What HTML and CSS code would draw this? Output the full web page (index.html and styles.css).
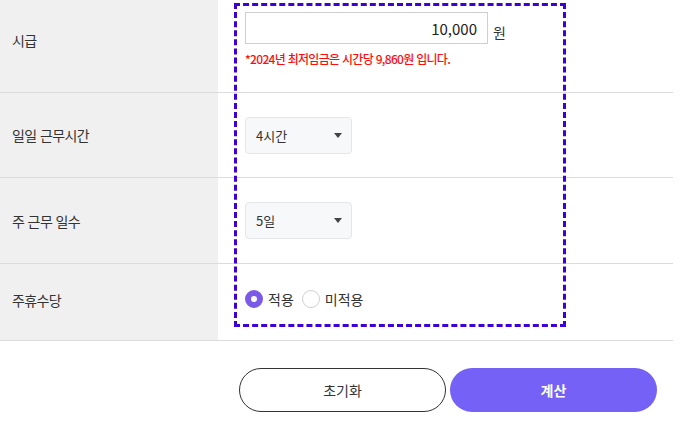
FILE: index.html
```html
<!DOCTYPE html>
<html lang="ko">
<head>
    <meta charset="UTF-8">
    <meta name="viewport" content="width=device-width, initial-scale=1.0">
    <title>시급 계산기</title>
    <link rel="stylesheet" href="styles.css">
</head>
<body>
    <div class="calc">
        <div class="row row-wage">
            <div class="label">시급</div>
            <div class="value">
                <div class="wage-line">
                    <input class="wage-input" type="text" value="10,000">
                    <span class="unit">원</span>
                </div>
                <p class="note">*2024년 최저임금은 시간당 9,860원 입니다.</p>
            </div>
        </div>
        <div class="row row-hours">
            <div class="label">일일 근무시간</div>
            <div class="value">
                <div class="select"><span>4시간</span><span class="caret"></span></div>
            </div>
        </div>
        <div class="row row-days">
            <div class="label">주 근무 일수</div>
            <div class="value">
                <div class="select"><span>5일</span><span class="caret"></span></div>
            </div>
        </div>
        <div class="row row-holiday">
            <div class="label">주휴수당</div>
            <div class="value radios">
                <label class="radio"><span class="dot checked"></span>적용</label>
                <label class="radio"><span class="dot"></span>미적용</label>
            </div>
        </div>
        <div class="highlight"></div>
    </div>
    <div class="actions">
        <button class="btn btn-reset">초기화</button>
        <button class="btn btn-calc">계산</button>
    </div>
</body>
</html>
```

FILE: styles.css
```css
body {
    margin: 0;
    background-color: #fff;
    font-family: "Noto Sans CJK KR", "Noto Sans", sans-serif;
    color: #333;
}
.calc {
    position: relative;
    width: 673px;
    margin-top: -12px;
}
.row {
    display: grid;
    grid-template-columns: 218px 1fr;
    border-bottom: 1px solid #dcdcdc;
    box-sizing: border-box;
}
.row-wage { height: 105px; }
.row-hours { height: 85px; }
.row-days { height: 86px; }
.row-holiday { height: 77px; }
.label {
    background-color: #f0f0f0;
    display: flex;
    align-items: center;
    padding-left: 12px;
    font-size: 14px;
    letter-spacing: -0.6px;
    color: #333;
}
.row-holiday .label {
    padding-bottom: 4px;
}
.value {
    display: flex;
    flex-direction: column;
    justify-content: center;
    padding-left: 27px;
}
.wage-line {
    display: flex;
    align-items: flex-end;
    gap: 5px;
}
.wage-input {
    width: 243px;
    height: 32px;
    box-sizing: border-box;
    border: 1px solid #cfcfcf;
    padding: 0 10px;
    text-align: right;
    font-family: inherit;
    font-size: 15px;
    color: #222;
    outline: none;
}
.unit {
    font-size: 14px;
    line-height: 20px;
    margin-bottom: 2px;
}
.note {
    margin: 6px 0 0;
    font-size: 12px;
    line-height: 18px;
    font-weight: 500;
    letter-spacing: -0.7px;
    color: #ff0d0d;
}
.select {
    width: 107px;
    height: 37px;
    box-sizing: border-box;
    border: 1px solid #e4e6ea;
    border-radius: 4px;
    background-color: #f7f8fa;
    display: flex;
    align-items: center;
    justify-content: space-between;
    padding: 0 9px 0 10px;
    font-size: 13px;
    color: #333;
}
.caret {
    width: 0;
    height: 0;
    border-left: 4.5px solid transparent;
    border-right: 4.5px solid transparent;
    border-top: 5px solid #444;
}
.radios {
    flex-direction: row;
    align-items: center;
    justify-content: flex-start;
    gap: 8px;
    padding-bottom: 6px;
}
.radio {
    display: flex;
    align-items: center;
    gap: 5px;
    font-size: 14px;
    color: #333;
}
.dot {
    width: 18px;
    height: 18px;
    box-sizing: border-box;
    border-radius: 50%;
    border: 1px solid #d0d0d0;
    background-color: #fff;
}
.dot.checked {
    border: 6px solid #7a5ae6;
}
.highlight {
    position: absolute;
    left: 234px;
    top: 15px;
    width: 332px;
    height: 324px;
    box-sizing: border-box;
    border: 3px dashed #3c00d8;
    pointer-events: none;
}
.actions {
    display: flex;
    gap: 4px;
    padding: 27px 0 0 239px;
}
.btn {
    width: 207px;
    height: 44px;
    border-radius: 22px;
    font-family: inherit;
    font-size: 14px;
    cursor: pointer;
}
.btn-reset {
    background-color: #fff;
    border: 1px solid #333;
    color: #333;
}
.btn-calc {
    background-color: #7561f5;
    border: none;
    color: #fff;
    font-weight: bold;
}
```
